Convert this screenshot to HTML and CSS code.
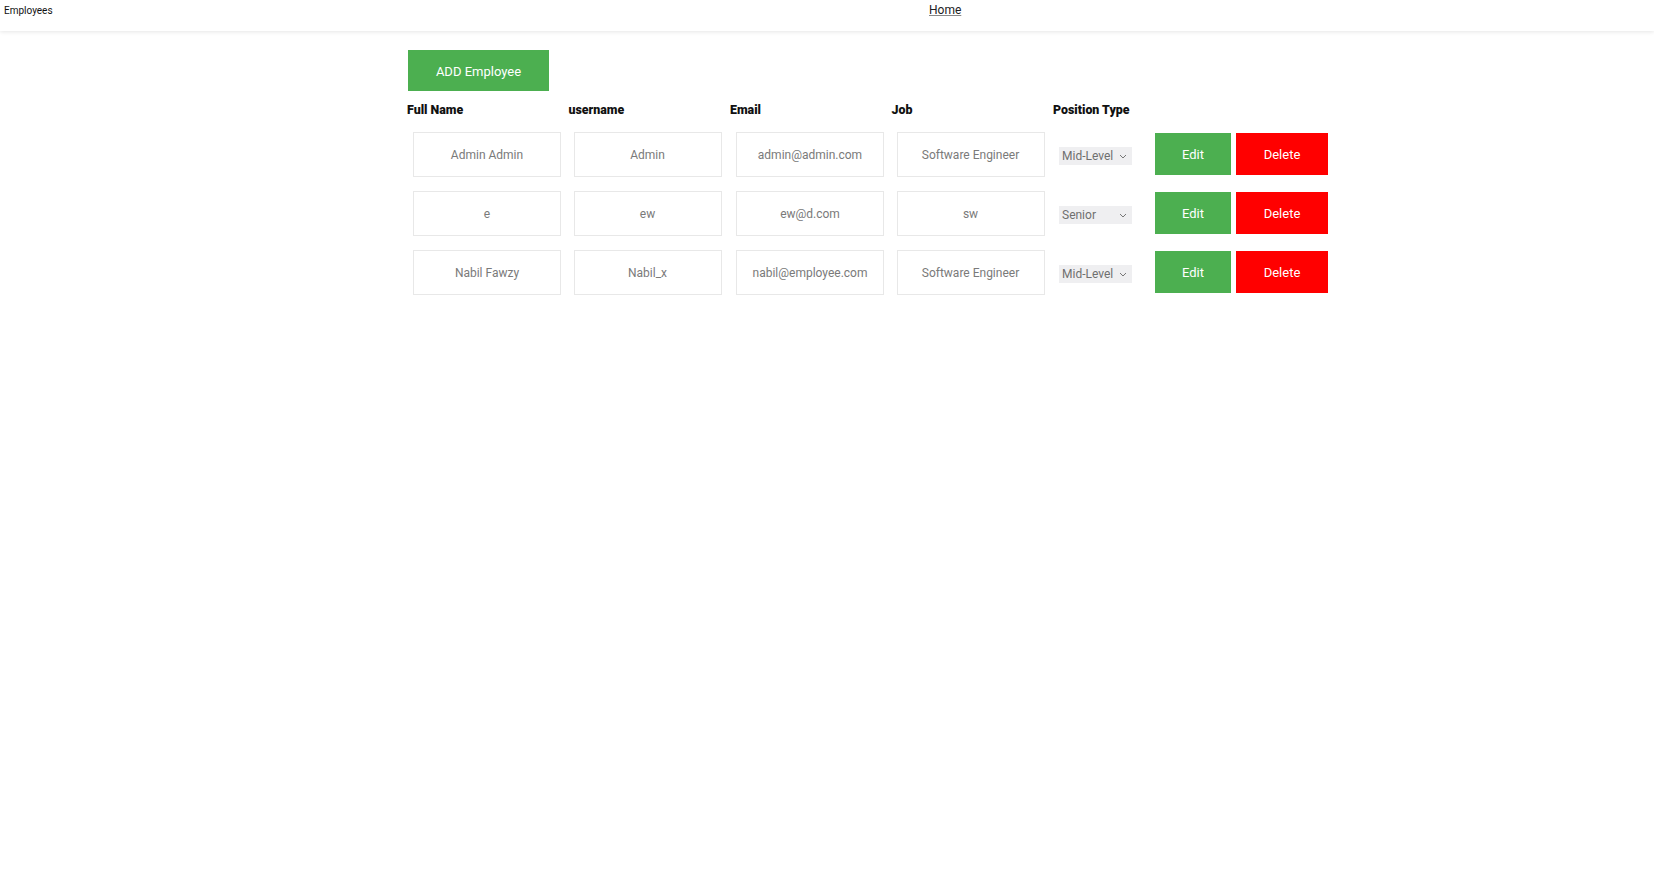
FILE: index.html
```html
<!DOCTYPE html>
<html lang="en">
<head>
<meta charset="utf-8">
<title>Employees</title>
<link rel="stylesheet" href="styles.css">
</head>
<body>
<nav class="nav">
  <span class="brand">Employees</span>
  <a class="home" href="#">Home</a>
</nav>
<main class="main">
  <button class="btn btn-add">ADD Employee</button>
  <div class="grid head">
    <div class="th">Full Name</div>
    <div class="th">username</div>
    <div class="th">Email</div>
    <div class="th">Job</div>
    <div class="th">Position Type</div>
    <div class="th"></div>
  </div>
  <div class="grid row">
    <div class="cell"><input class="field" value="Admin Admin"></div>
    <div class="cell"><input class="field" value="Admin"></div>
    <div class="cell"><input class="field" value="admin@admin.com"></div>
    <div class="cell"><input class="field" value="Software Engineer"></div>
    <div class="cell"><select class="sel"><option>Mid-Level</option><option>Senior</option></select></div>
    <div class="actions"><button class="btn btn-edit">Edit</button><button class="btn btn-del">Delete</button></div>
  </div>
  <div class="grid row">
    <div class="cell"><input class="field" value="e"></div>
    <div class="cell"><input class="field" value="ew"></div>
    <div class="cell"><input class="field" value="ew@d.com"></div>
    <div class="cell"><input class="field" value="sw"></div>
    <div class="cell"><select class="sel"><option>Senior</option><option>Mid-Level</option></select></div>
    <div class="actions"><button class="btn btn-edit">Edit</button><button class="btn btn-del">Delete</button></div>
  </div>
  <div class="grid row">
    <div class="cell"><input class="field" value="Nabil Fawzy"></div>
    <div class="cell"><input class="field" value="Nabil_x"></div>
    <div class="cell"><input class="field" value="nabil@employee.com"></div>
    <div class="cell"><input class="field" value="Software Engineer"></div>
    <div class="cell"><select class="sel"><option>Mid-Level</option><option>Senior</option></select></div>
    <div class="actions"><button class="btn btn-edit">Edit</button><button class="btn btn-del">Delete</button></div>
  </div>
</main>
</body>
</html>
```
FILE: styles.css
```css
* { box-sizing: border-box; }
body {
  margin: 0;
  font-family: Roboto, "Liberation Sans", sans-serif;
  background: #fff;
  color: #111;
}
.nav {
  height: 31px;
  display: grid;
  grid-template-columns: 929px auto;
  align-items: start;
  box-shadow: 0 1px 4px rgba(0, 0, 0, 0.10);
}
.brand {
  font-size: 10px;
  line-height: 12px;
  padding: 5px 0 0 4px;
  color: #111;
}
.home {
  font-size: 12px;
  line-height: 14px;
  padding-top: 3px;
  color: #222;
  text-decoration: underline;
  text-decoration-color: #888;
}
.main {
  padding-left: 407px;
  padding-top: 19px;
}
.btn {
  border: none;
  color: #fff;
  font-family: Roboto, "Liberation Sans", sans-serif;
  font-size: 13px;
  font-weight: 400;
  cursor: pointer;
  padding: 0;
}
.btn-add {
  display: block;
  margin-left: 1px;
  width: 141px;
  height: 41px;
  padding-top: 1px;
  background: #4caf50;
}
.grid {
  display: grid;
  grid-template-columns: 161.5px 161.5px 161.5px 161.5px 102px auto;
}
.head {
  margin-top: 12px;
}
.th {
  font-size: 12.4px;
  line-height: 14px;
  font-weight: 900;
  color: #111;
}
.row {
  height: 59px;
  align-items: center;
}
.head + .row { margin-top: 8px; }
.cell { padding-left: 6px; }
.cell:nth-child(2), .cell:nth-child(4) { padding-left: 5px; }
.field {
  width: 148px;
  height: 45px;
  border: 1px solid #e8e8e8;
  text-align: center;
  font-family: Roboto, "Liberation Sans", sans-serif;
  font-size: 12px;
  color: #7a7a7a;
  background: #fff;
  outline: none;
  padding: 0 4px;
}
.sel {
  -webkit-appearance: none;
  appearance: none;
  width: 73px;
  height: 18px;
  margin-top: 3px;
  border: none;
  border-radius: 0;
  background-color: #efeff1;
  background-image: url("data:image/svg+xml,%3Csvg xmlns='http://www.w3.org/2000/svg' width='8' height='5' viewBox='0 0 8 5'%3E%3Cpath d='M1 1l3 3 3-3' fill='none' stroke='%23777' stroke-width='1'/%3E%3C/svg%3E");
  background-repeat: no-repeat;
  background-position: right 5px center;
  font-family: Roboto, "Liberation Sans", sans-serif;
  font-size: 12px;
  color: #6f6f6f;
  padding: 0 0 0 3px;
}
.actions {
  display: flex;
  gap: 5px;
  margin-top: -1px;
}
.btn-edit {
  width: 76px;
  height: 42px;
  background: #4caf50;
}
.btn-del {
  width: 92px;
  height: 42px;
  background: #ff0000;
}
```
